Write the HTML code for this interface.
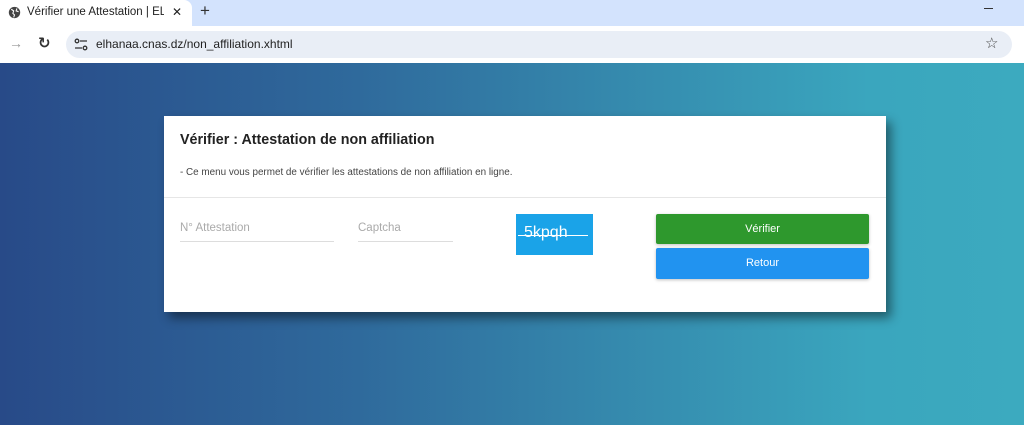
<!DOCTYPE html>
<html><head><style>
*{margin:0;padding:0;box-sizing:border-box}
body{width:1024px;height:425px;overflow:hidden;font-family:"Liberation Sans","DejaVu Sans",sans-serif;position:relative;background:#fff}
.tabbar{position:absolute;left:0;top:0;width:1024px;height:26px;background:#d3e3fd}
.tab{position:absolute;left:0;top:0;width:192px;height:26px;background:#fff;border-radius:0 8px 0 0;font-size:11.5px;color:#222}
.toolbar{position:absolute;left:0;top:26px;width:1024px;height:37px;background:#fff}
.addr{position:absolute;left:66px;top:5px;width:946px;height:27px;background:#e9eef6;border-radius:14px}
.page{position:absolute;left:0;top:63px;width:1024px;height:362px;background:linear-gradient(90deg,#284a88 0%,#2f6a9c 35%,#3589ad 60%,#3aa6be 85%,#3caabf 100%)}
.card{position:absolute;left:164px;top:116px;width:722px;height:196px;background:#fff;box-shadow:5px 6px 10px rgba(0,0,0,.45)}
.t{position:absolute;left:16px;top:16px;font-size:14.3px;font-weight:bold;color:#222}
.d{position:absolute;left:16px;top:51px;font-size:9.9px;color:#444}
.hr{position:absolute;left:0;top:81px;width:722px;height:1px;background:#e6e6e6}
.lbl{position:absolute;top:106px;font-size:11.5px;color:#aaa}
.ul{position:absolute;top:125px;height:1px;background:#ddd}
.cap{position:absolute;left:352px;top:98px;width:77px;height:41px;background:#1aa3e8;color:#fff;font-size:16px;padding:10px 0 0 8px}
.btn{position:absolute;left:492px;width:213px;color:#fff;font-size:11px;text-align:center;border-radius:2px;box-shadow:0 1px 3px rgba(0,0,0,.25)}
</style></head><body>
<div class="tabbar">
<div class="tab"><svg style="position:absolute;left:8px;top:6px" width="13" height="13" viewBox="0 0 16 16"><circle cx="8" cy="8" r="7" fill="#444"/><path d="M4 4l3 2-1 3 2 2-1 3M11 3l-1 3 3 1" stroke="#fff" stroke-width="1.3" fill="none"/></svg>
<span style="position:absolute;left:27px;top:6px;width:137px;overflow:hidden;white-space:nowrap">Vérifier une Attestation | EL-HANAA</span>
<span style="position:absolute;left:172px;top:5px;font-size:12px;font-weight:bold">✕</span></div>
<span style="position:absolute;left:200px;top:1px;font-size:17px;color:#333">+</span>
<div style="position:absolute;left:984px;top:8px;width:9px;height:1px;background:#333"></div>
</div>
<div class="toolbar">
<span style="position:absolute;left:9px;top:9px;font-size:14px;color:#999">→</span>
<span style="position:absolute;left:38px;top:8px;font-size:15px;color:#333;font-weight:bold">↻</span>
<div class="addr">
<svg style="position:absolute;left:8px;top:7px" width="14" height="13" viewBox="0 0 14 13"><circle cx="3" cy="3" r="1.8" fill="none" stroke="#333" stroke-width="1.3"/><path d="M6 3h7M1 10h7" stroke="#333" stroke-width="1.3"/><circle cx="11" cy="10" r="1.8" fill="none" stroke="#333" stroke-width="1.3"/></svg>
<span style="position:absolute;left:30px;top:6px;font-size:12px;color:#222">elhanaa.cnas.dz/non_affiliation.xhtml</span>
<span style="position:absolute;left:919px;top:3px;font-size:15px;color:#444">☆</span>
</div></div>
<div class="page"></div>
<div class="card">
<div class="t">Vérifier : Attestation de non affiliation</div>
<div class="d">- Ce menu vous permet de vérifier les attestations de non affiliation en ligne.</div>
<div class="hr"></div>
<div class="lbl" style="left:16px">N° Attestation</div>
<div class="ul" style="left:16px;width:154px"></div>
<div class="lbl" style="left:194px">Captcha</div>
<div class="ul" style="left:194px;width:95px"></div>
<div class="cap">5kpqh<div style="position:absolute;left:2px;top:21px;width:70px;height:1px;background:#fff"></div></div>
<div class="btn" style="top:98px;height:30px;line-height:30px;background:#2e982d">Vérifier</div>
<div class="btn" style="top:132px;height:31px;line-height:31px;background:#2193f0">Retour</div>
</div>
</body></html>
